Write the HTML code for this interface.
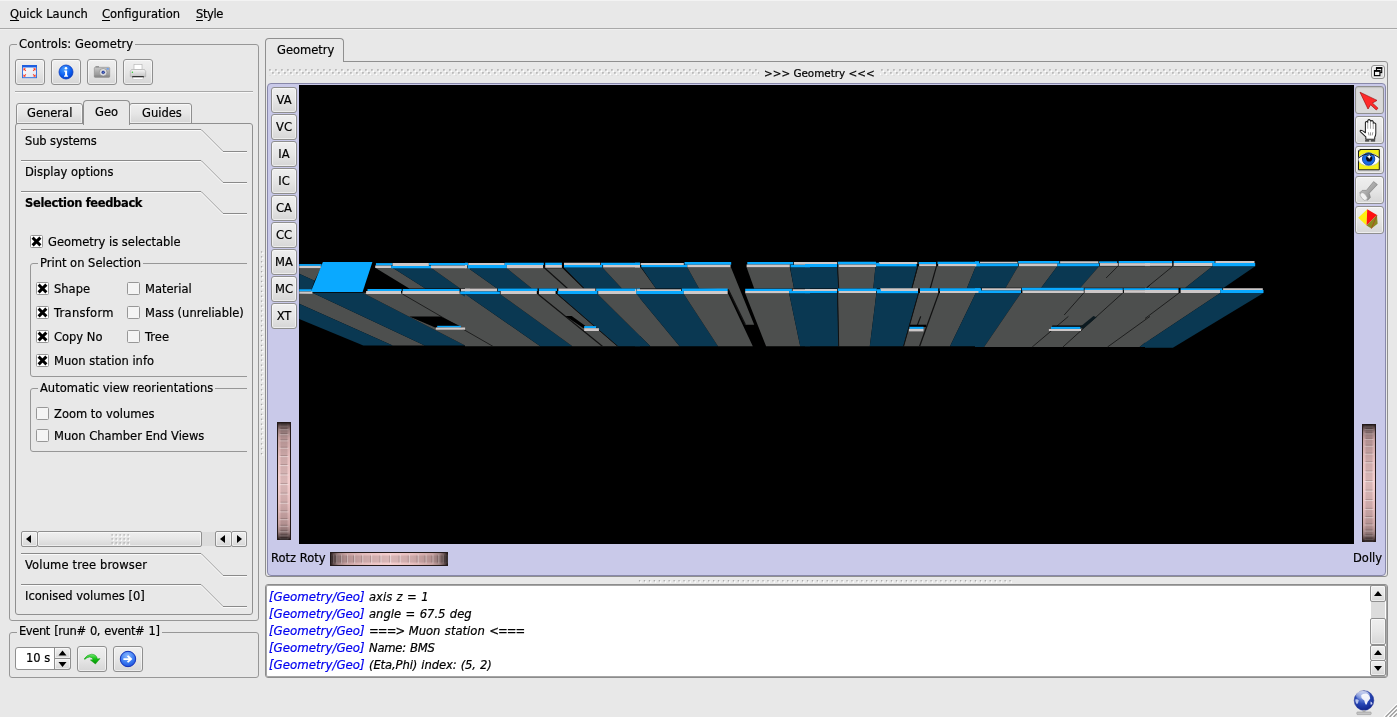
<!DOCTYPE html><html><head><meta charset="utf-8"><title>VP1</title><style>
html,body{margin:0;padding:0}
body{width:1397px;height:717px;overflow:hidden;background:#e8e8e8;position:relative;
 font-family:"DejaVu Sans","Liberation Sans",sans-serif;font-size:11.5px;color:#000;-webkit-text-stroke:0.2px #000}
.a{position:absolute}
.t{position:absolute;white-space:nowrap;line-height:14px;height:14px}
.b{font-weight:bold;letter-spacing:-0.35px}
.btn{position:absolute;box-sizing:border-box;border:1px solid #8f8f8f;border-radius:3px;
 background:linear-gradient(#efefef,#e6e6e6 50%,#d6d6d6);box-shadow:inset 0 0 0 1px rgba(255,255,255,.55)}
.vb{text-align:center;line-height:23px;font-size:11.5px}
.gb{position:absolute;box-sizing:border-box;border:1px solid #979797;border-radius:3px}
.gbt{position:absolute;background:#e8e8e8;padding:0 2px;white-space:nowrap;line-height:14px}
.cb{position:absolute;box-sizing:border-box;width:13px;height:13px;border:1px solid #979797;border-radius:1.5px;background:#f4f4f4}
.cb.on{background:#fff}
.log{font-style:italic;font-size:11.6px;word-spacing:0.7px}
.log i{color:#0000f0;-webkit-text-stroke:0.2px #0000f0;font-style:italic;font-size:11.8px}
.h{margin-left:-1px;letter-spacing:-1.2px}
u{text-decoration:underline;text-decoration-thickness:1.2px;text-underline-offset:1.6px}
svg{position:absolute;overflow:visible}
</style></head><body><div id="root" style="position:absolute;left:0;top:0;width:1397px;height:717px;will-change:transform">
<div class="a" style="left:0;top:0;width:1397px;height:28px;background:#e8e8e8;border-bottom:1px solid #a9a9a9"></div>
<div class="a" style="left:0;top:29px;width:1397px;height:1px;background:#f0f0f0"></div>
<div class="a" style="left:0;top:0;width:1397px;height:1px;background:#f3f3f3"></div>
<div class="t" style="left:10px;top:7px"><u>Q</u>uick Launch</div>
<div class="t" style="left:102px;top:7px"><u>C</u>onfiguration</div>
<div class="t" style="left:196px;top:7px;letter-spacing:-0.4px"><u>S</u>tyle</div>
<div class="gb" style="left:9px;top:44px;width:250px;height:577px"></div>
<div class="gbt" style="left:17px;top:37px;letter-spacing:0.1px">Controls: Geometry</div>
<div class="btn" style="left:15px;top:59px;width:30px;height:26px"></div>
<div class="btn" style="left:51px;top:59px;width:30px;height:26px"></div>
<div class="btn" style="left:87px;top:59px;width:30px;height:26px"></div>
<div class="btn" style="left:123px;top:59px;width:30px;height:26px"></div>
<div class="a" style="left:15px;top:91px;width:238px;height:1px;background:#a8a8a8"></div>
<div class="a" style="left:15px;top:92px;width:238px;height:1px;background:#f8f8f8"></div>
<div class="gb" style="left:15px;top:123px;width:238px;height:492px;border-color:#8f8f8f"></div>
<div class="btn" style="left:16px;top:103px;width:67px;height:21px;border-radius:3px 3px 0 0;border-bottom-color:#8f8f8f"></div>
<div class="btn" style="left:129px;top:103px;width:63px;height:21px;border-radius:3px 3px 0 0"></div>
<div class="a" style="left:83px;top:100px;width:47px;height:25px;box-sizing:border-box;border:1px solid #8f8f8f;border-bottom:none;border-radius:4px 4px 0 0;background:#e8e8e8"></div>
<div class="t" style="left:27px;top:106px">General</div>
<div class="t" style="left:95px;top:105px">Geo</div>
<div class="t" style="left:142px;top:106px">Guides</div>
<svg style="left:0;top:0" width="260" height="717"><path d="M21 129.5H201L223 151.5H247" fill="none" stroke="#8a8a8a" stroke-width="1"/><path d="M21 130.5H201L223 152.5H247" fill="none" stroke="#fafafa" stroke-width="1"/></svg>
<div class="t" style="left:25px;top:134px;letter-spacing:-0.13px">Sub systems</div>
<svg style="left:0;top:0" width="260" height="717"><path d="M21 160.5H201L223 182.5H247" fill="none" stroke="#8a8a8a" stroke-width="1"/><path d="M21 161.5H201L223 183.5H247" fill="none" stroke="#fafafa" stroke-width="1"/></svg>
<div class="t" style="left:25px;top:165px">Display options</div>
<svg style="left:0;top:0" width="260" height="717"><path d="M21 191.5H201L223 213.5H247" fill="none" stroke="#8a8a8a" stroke-width="1"/><path d="M21 192.5H201L223 214.5H247" fill="none" stroke="#fafafa" stroke-width="1"/></svg>
<div class="t b" style="left:25px;top:196px">Selection feedback</div>
<svg style="left:0;top:0" width="260" height="717"><path d="M21 553.5H201L223 575.5H247" fill="none" stroke="#8a8a8a" stroke-width="1"/><path d="M21 554.5H201L223 576.5H247" fill="none" stroke="#fafafa" stroke-width="1"/></svg>
<div class="t" style="left:25px;top:558px;letter-spacing:0.15px">Volume tree browser</div>
<svg style="left:0;top:0" width="260" height="717"><path d="M21 584.5H201L223 606.5H247" fill="none" stroke="#8a8a8a" stroke-width="1"/><path d="M21 585.5H201L223 607.5H247" fill="none" stroke="#fafafa" stroke-width="1"/></svg>
<div class="t" style="left:25px;top:589px">Iconised volumes [0]</div>
<div class="cb on" style="left:30px;top:235px"></div><svg style="left:30px;top:235px" width="13" height="13" viewBox="0 0 13 13"><path d="M3.7 3.7L9.3 9.3M9.3 3.7L3.7 9.3" stroke="#000" stroke-width="3" stroke-linecap="square"/></svg>
<div class="t" style="left:48px;top:235px">Geometry is selectable</div>
<div class="a" style="left:30px;top:255px;width:217px;height:210px;overflow:hidden"><div class="gb" style="left:0;top:8px;width:240px;height:114px"></div><div class="gbt" style="left:8px;top:1px">Print on Selection</div><div class="gb" style="left:0;top:133px;width:240px;height:64px"></div><div class="gbt" style="left:8px;top:126px">Automatic view reorientations</div></div>
<div class="cb on" style="left:36px;top:282px"></div><svg style="left:36px;top:282px" width="13" height="13" viewBox="0 0 13 13"><path d="M3.7 3.7L9.3 9.3M9.3 3.7L3.7 9.3" stroke="#000" stroke-width="3" stroke-linecap="square"/></svg>
<div class="t" style="left:54px;top:282px">Shape</div>
<div class="cb" style="left:127px;top:282px"></div>
<div class="t" style="left:145px;top:282px">Material</div>
<div class="cb on" style="left:36px;top:306px"></div><svg style="left:36px;top:306px" width="13" height="13" viewBox="0 0 13 13"><path d="M3.7 3.7L9.3 9.3M9.3 3.7L3.7 9.3" stroke="#000" stroke-width="3" stroke-linecap="square"/></svg>
<div class="t" style="left:54px;top:306px"><span style="letter-spacing:0.28px">Transform</span></div>
<div class="cb" style="left:127px;top:306px"></div>
<div class="t" style="left:145px;top:306px">Mass (unreliable)</div>
<div class="cb on" style="left:36px;top:330px"></div><svg style="left:36px;top:330px" width="13" height="13" viewBox="0 0 13 13"><path d="M3.7 3.7L9.3 9.3M9.3 3.7L3.7 9.3" stroke="#000" stroke-width="3" stroke-linecap="square"/></svg>
<div class="t" style="left:54px;top:330px">Copy No</div>
<div class="cb" style="left:127px;top:330px"></div>
<div class="t" style="left:145px;top:330px">Tree</div>
<div class="cb on" style="left:36px;top:354px"></div><svg style="left:36px;top:354px" width="13" height="13" viewBox="0 0 13 13"><path d="M3.7 3.7L9.3 9.3M9.3 3.7L3.7 9.3" stroke="#000" stroke-width="3" stroke-linecap="square"/></svg>
<div class="t" style="left:54px;top:354px">Muon station info</div>
<div class="cb" style="left:36px;top:407px"></div>
<div class="t" style="left:54px;top:407px">Zoom to volumes</div>
<div class="cb" style="left:36px;top:429px"></div>
<div class="t" style="left:54px;top:429px">Muon Chamber End Views</div>
<div class="btn" style="left:21px;top:531px;width:17px;height:16px;border-radius:2px"></div>
<div class="btn" style="left:37px;top:531px;width:165px;height:16px;border-radius:2px"></div>
<div class="a" style="left:202px;top:532px;width:13px;height:14px;background:#dcdcdc"></div>
<div class="btn" style="left:215px;top:531px;width:17px;height:16px;border-radius:2px"></div>
<div class="btn" style="left:231px;top:531px;width:16px;height:16px;border-radius:2px"></div>
<svg style="left:0;top:0" width="260" height="717"><path d="M26 539l5-4v8zM220 539l5-4v8zM242 539l-5-4v8z" fill="#000"/><rect x="111.5" y="534.3" width="1.3" height="1.3" fill="#a4a4a4"/><rect x="112.7" y="535.5" width="1.400" height="1.400" fill="#fff"/><rect x="111.5" y="538.3" width="1.3" height="1.3" fill="#a4a4a4"/><rect x="112.7" y="539.5" width="1.400" height="1.400" fill="#fff"/><rect x="111.5" y="542.3" width="1.3" height="1.3" fill="#a4a4a4"/><rect x="112.7" y="543.5" width="1.400" height="1.400" fill="#fff"/><rect x="115.5" y="534.3" width="1.3" height="1.3" fill="#a4a4a4"/><rect x="116.7" y="535.5" width="1.400" height="1.400" fill="#fff"/><rect x="115.5" y="538.3" width="1.3" height="1.3" fill="#a4a4a4"/><rect x="116.7" y="539.5" width="1.400" height="1.400" fill="#fff"/><rect x="115.5" y="542.3" width="1.3" height="1.3" fill="#a4a4a4"/><rect x="116.7" y="543.5" width="1.400" height="1.400" fill="#fff"/><rect x="119.5" y="534.3" width="1.3" height="1.3" fill="#a4a4a4"/><rect x="120.7" y="535.5" width="1.400" height="1.400" fill="#fff"/><rect x="119.5" y="538.3" width="1.3" height="1.3" fill="#a4a4a4"/><rect x="120.7" y="539.5" width="1.400" height="1.400" fill="#fff"/><rect x="119.5" y="542.3" width="1.3" height="1.3" fill="#a4a4a4"/><rect x="120.7" y="543.5" width="1.400" height="1.400" fill="#fff"/><rect x="123.5" y="534.3" width="1.3" height="1.3" fill="#a4a4a4"/><rect x="124.7" y="535.5" width="1.400" height="1.400" fill="#fff"/><rect x="123.5" y="538.3" width="1.3" height="1.3" fill="#a4a4a4"/><rect x="124.7" y="539.5" width="1.400" height="1.400" fill="#fff"/><rect x="123.5" y="542.3" width="1.3" height="1.3" fill="#a4a4a4"/><rect x="124.7" y="543.5" width="1.400" height="1.400" fill="#fff"/><rect x="127.5" y="534.3" width="1.3" height="1.3" fill="#a4a4a4"/><rect x="128.7" y="535.5" width="1.400" height="1.400" fill="#fff"/><rect x="127.5" y="538.3" width="1.3" height="1.3" fill="#a4a4a4"/><rect x="128.7" y="539.5" width="1.400" height="1.400" fill="#fff"/><rect x="127.5" y="542.3" width="1.3" height="1.3" fill="#a4a4a4"/><rect x="128.7" y="543.5" width="1.400" height="1.400" fill="#fff"/></svg>
<div class="gb" style="left:9px;top:632px;width:250px;height:46px"></div>
<div class="gbt" style="left:17px;top:624px;word-spacing:1px;letter-spacing:-0.4px">Event [run# 0, event# 1]</div>
<div class="a" style="left:15px;top:647px;width:56px;height:23px;box-sizing:border-box;border:1px solid #8f8f8f;border-radius:3px;background:#fff"></div>
<div class="t" style="left:26px;top:651px">10 s</div>
<div class="btn" style="left:54px;top:647px;width:17px;height:12px;border-radius:0 3px 0 0"></div>
<div class="btn" style="left:54px;top:658px;width:17px;height:12px;border-radius:0 0 3px 0"></div>
<svg style="left:0;top:0" width="260" height="717"><path d="M62.5 650.5l4 5h-8zM62.5 667l4-5h-8z" fill="#000"/></svg>
<div class="btn" style="left:77px;top:646px;width:30px;height:26px"></div>
<div class="btn" style="left:113px;top:646px;width:30px;height:26px"></div>
<div class="a" style="left:265px;top:61px;width:1123px;height:516px;box-sizing:border-box;border:1px solid #8f8f8f;border-radius:0 3px 3px 3px"></div>
<div class="a" style="left:265px;top:38px;width:79px;height:24px;box-sizing:border-box;border:1px solid #8f8f8f;border-bottom:none;border-radius:4px 4px 0 0;background:#e8e8e8"></div>
<div class="t" style="left:277px;top:43px">Geometry</div>
<svg style="left:269px;top:69px" width="1100" height="6"><defs><pattern id="dots" width="6" height="6" patternUnits="userSpaceOnUse"><rect x="0.2" y="0.2" width="1.5" height="1.5" fill="#a2a2a2"/><rect x="1.5" y="1.5" width="1.6" height="1.6" fill="#fff"/><rect x="3.2" y="3.2" width="1.5" height="1.5" fill="#a2a2a2"/><rect x="4.500" y="4.500" width="1.600" height="1.600" fill="#fff"/></pattern></defs><rect width="1100" height="6.2" fill="url(#dots)"/></svg>
<div class="t" style="left:759px;top:66px;background:#e8e8e8;padding:0 5px;font-size:10.4px">&gt;&gt;&gt; Geometry &lt;&lt;&lt;</div>
<div class="btn" style="left:1371px;top:65px;width:14px;height:14px;border-radius:3px"></div>
<div class="a" style="left:267px;top:83px;width:1119px;height:493px;box-sizing:border-box;border:1px solid #8888aa;border-radius:4px;background:#c9c9e9"></div>
<svg style="left:299px;top:85px" width="1055" height="459" viewBox="299 85 1055 459" shape-rendering="auto">
<rect x="299" y="85" width="1055" height="459" fill="#000"/>
<polygon fill="#4d4f4e" points="299.2,268.2 320.8,268.2 314.5,280.8 299.2,273.8"/>
<polygon fill="#0a3852" points="299.2,273.8 314.5,280.8 311.7,289.2 299.2,289.2"/>
<polygon fill="#4d4f4e" points="299.2,293.8 312.4,292.7 424.7,345.6 392.6,345.6 299.2,303.8"/>
<polygon fill="#0a3852" points="299.2,303.8 392.6,345.6 363.3,345.6 299.2,319.1"/>
<polygon fill="#0a3852" points="312.4,292.7 362.6,292.7 465.1,345.6 424.7,345.6"/>
<polygon fill="#4d4f4e" points="362.6,292.7 470.0,292.7 470.0,345.6 465.1,345.6"/>
<polygon fill="#4d4f4e" points="375.2,267.8 392.6,267.8 425.4,288.5 409.3,288.5"/>
<polygon fill="#0a3852" points="392.6,267.8 431.0,267.8 460.2,288.5 425.4,288.5"/>
<polygon fill="#4d4f4e" points="431.0,267.8 470.0,267.8 470.0,288.5 460.2,288.5"/>
<polygon fill="#0a3852" points="460.2,294.0 470.0,294.0 470.0,299.6"/>
<polygon fill="#4d4f4e" points="465.0,268.2 468.5,268.2 497.1,288.5 465.0,288.5"/>
<polygon fill="#0a3852" points="468.5,268.2 506.8,268.2 531.9,288.5 497.1,288.5"/>
<polygon fill="#4d4f4e" points="506.8,268.2 562.6,268.2 583.5,288.5 531.9,288.5"/>
<polygon fill="#0a3852" points="564.0,267.6 602.4,267.6 621.9,288.5 584.2,288.5"/>
<polygon fill="#4d4f4e" points="602.4,267.6 640.0,267.6 640.0,288.5 621.9,288.5"/>
<polygon fill="#4d4f4e" points="465.0,294.0 465.0,346.3 540.3,346.3"/>
<polygon fill="#0a3852" points="465.0,294.0 499.9,294.0 572.4,346.3 540.3,346.3"/>
<polygon fill="#4d4f4e" points="499.9,294.0 557.0,294.0 617.7,346.3 572.4,346.3"/>
<polygon fill="#0a3852" points="557.7,294.0 597.5,294.0 640.0,335.9 640.0,346.3 617.7,346.3"/>
<polygon fill="#4d4f4e" points="597.5,294.0 640.0,294.0 640.0,335.9"/>
<polygon fill="#4d4f4e" points="635.0,267.3 640.6,267.3 655.9,288.5 635.0,288.5"/>
<polygon fill="#0a3852" points="641.3,267.3 687.3,267.3 699.1,288.5 655.9,288.5"/>
<polygon fill="#4d4f4e" points="687.3,267.3 730.9,267.3 754.2,324.7 745.2,324.7 728.4,289.2 699.1,288.5"/>
<polygon fill="#4d4f4e" points="746.6,267.3 789.8,267.3 794.0,288.5 754.2,288.5"/>
<polygon fill="#0a3852" points="790.1,267.3 810.0,267.3 810.0,288.5 794.0,288.5"/>
<polygon fill="#4d4f4e" points="635.0,294.0 636.4,294.0 679.6,346.3 650.3,346.3 635.0,331.0"/>
<polygon fill="#0a3852" points="635.0,331.0 650.3,346.3 635.0,346.3"/>
<polygon fill="#0a3852" points="636.4,294.0 683.8,294.0 718.0,346.3 679.6,346.3"/>
<polygon fill="#4d4f4e" points="683.8,294.0 728.2,294.0 752.8,346.3 718.0,346.3"/>
<polygon fill="#4d4f4e" points="745.2,293.3 789.1,293.3 800.2,346.3 766.1,346.3"/>
<polygon fill="#0a3852" points="789.1,293.3 810.0,293.3 810.0,346.3 800.2,346.3"/>
<polygon fill="#0a3852" points="805.0,266.9 837.4,266.9 838.5,288.5 805.0,288.5"/>
<polygon fill="#4d4f4e" points="837.8,266.9 875.4,266.9 873.3,288.5 838.5,288.5"/>
<polygon fill="#0a3852" points="875.4,266.9 917.3,266.4 911.7,288.5 873.3,288.5"/>
<polygon fill="#4d4f4e" points="918.2,266.2 975.8,266.2 966.8,288.5 912.1,288.5"/>
<polygon fill="#0a3852" points="975.8,266.2 980.0,266.2 980.0,288.5 966.8,288.5"/>
<polygon fill="#0a3852" points="805.0,292.9 837.4,292.9 838.5,346.3 805.0,346.3"/>
<polygon fill="#4d4f4e" points="837.8,292.9 876.4,292.9 869.8,346.3 838.7,346.3"/>
<polygon fill="#0a3852" points="876.4,293.3 918.2,293.3 903.3,346.3 869.8,346.3"/>
<polygon fill="#4d4f4e" points="918.7,292.9 975.8,292.9 950.0,346.3 903.7,346.3"/>
<polygon fill="#0a3852" points="975.8,292.9 980.0,292.9 980.0,346.3 950.0,346.3"/>
<polygon fill="#0a3852" points="975.0,266.2 1018.2,266.2 1005.7,287.8 975.0,287.8"/>
<polygon fill="#4d4f4e" points="1018.2,266.2 1057.3,266.2 1041.2,287.8 1005.7,287.8"/>
<polygon fill="#0a3852" points="1057.3,266.2 1099.1,266.2 1080.3,287.8 1041.2,287.8"/>
<polygon fill="#4d4f4e" points="1099.1,266.2 1150.0,266.2 1150.0,287.8 1080.3,287.8"/>
<polygon fill="#0a3852" points="975.0,292.9 1021.0,292.9 984.1,347.0 975.0,347.0"/>
<polygon fill="#4d4f4e" points="1021.0,292.9 1150.0,292.9 1150.0,338.7 1139.6,347.0 984.1,347.0"/>
<polygon fill="#0a3852" points="1150.0,338.7 1150.0,347.0 1139.6,347.0"/>
<polygon fill="#4d4f4e" points="1145.0,266.2 1212.6,266.2 1185.4,287.8 1145.0,287.8"/>
<polygon fill="#0a3852" points="1212.6,266.2 1255.2,266.2 1223.8,287.8 1185.4,287.8"/>
<polygon fill="#4d4f4e" points="1145.0,292.9 1220.3,292.9 1145.0,342.9"/>
<polygon fill="#0a3852" points="1220.3,292.9 1263.5,292.9 1172.9,347.7 1145.0,347.7 1145.0,342.9"/>
<line x1="402.4" y1="294.0" x2="465.0" y2="330.3" stroke="#111" stroke-width="0.8"/>
<line x1="543.8" y1="267.3" x2="567.5" y2="288.5" stroke="#111" stroke-width="1.2"/>
<line x1="563.3" y1="267.6" x2="584.2" y2="288.5" stroke="#111" stroke-width="1.0"/>
<line x1="465.0" y1="330.3" x2="492.9" y2="346.3" stroke="#111" stroke-width="0.8"/>
<line x1="537.8" y1="294.0" x2="602.4" y2="346.3" stroke="#111" stroke-width="1.2"/>
<line x1="557.0" y1="294.0" x2="617.7" y2="346.3" stroke="#111" stroke-width="1.0"/>
<line x1="728.2" y1="289.6" x2="745.4" y2="324.7" stroke="#111" stroke-width="1.4"/>
<line x1="936.5" y1="266.2" x2="930.2" y2="288.5" stroke="#111" stroke-width="1.2"/>
<line x1="917.7" y1="266.4" x2="911.8" y2="288.5" stroke="#111" stroke-width="1.0"/>
<line x1="837.6" y1="266.9" x2="838.7" y2="288.5" stroke="#111" stroke-width="1.0"/>
<line x1="938.9" y1="292.9" x2="919.6" y2="346.3" stroke="#111" stroke-width="1.3"/>
<line x1="918.5" y1="293.3" x2="903.6" y2="346.3" stroke="#111" stroke-width="1.0"/>
<line x1="837.6" y1="292.9" x2="838.7" y2="346.3" stroke="#111" stroke-width="1.0"/>
<line x1="920.7" y1="316.4" x2="917.3" y2="325.4" stroke="#111" stroke-width="1.2"/>
<line x1="1117.9" y1="266.2" x2="1106.1" y2="278.0" stroke="#111" stroke-width="0.8"/>
<line x1="1150.0" y1="285.0" x2="1147.2" y2="287.8" stroke="#111" stroke-width="0.8"/>
<line x1="1083.8" y1="292.9" x2="1064.2" y2="315.0" stroke="#111" stroke-width="0.8"/>
<line x1="1068.4" y1="316.4" x2="1032.2" y2="347.0" stroke="#111" stroke-width="0.8"/>
<line x1="1122.8" y1="292.9" x2="1062.9" y2="347.0" stroke="#111" stroke-width="0.8"/>
<line x1="1150.0" y1="316.4" x2="1107.5" y2="347.0" stroke="#111" stroke-width="0.8"/>
<line x1="1172.9" y1="266.2" x2="1146.4" y2="287.8" stroke="#111" stroke-width="0.8"/>
<line x1="1179.2" y1="292.9" x2="1145.0" y2="318.5" stroke="#111" stroke-width="0.8"/>
<polygon fill="#0aa9ff" points="322.9,262.0 372.4,262.0 362.6,292.0 310.8,292.0"/>
<polygon fill="#0aa9ff" points="299.2,264.1 321.5,264.1 321.5,265.9 299.2,265.9"/>
<polygon fill="#cdc8c8" points="299.2,265.9 320.8,265.9 320.8,268.2 299.2,268.2"/>
<polygon fill="#0aa9ff" points="299.2,289.2 311.7,289.2 311.7,291.5 299.2,291.5"/>
<polygon fill="#cdc8c8" points="299.2,291.5 312.4,291.5 312.4,293.8 299.2,293.8"/>
<polygon fill="#0aa9ff" points="375.9,263.1 392.6,263.1 392.6,265.5 375.9,265.5"/>
<polygon fill="#cdc8c8" points="392.6,263.1 428.9,263.1 428.9,265.9 392.6,265.9"/>
<polygon fill="#0aa9ff" points="428.9,263.1 467.9,263.1 467.9,265.5 428.9,265.5"/>
<polygon fill="#cdc8c8" points="468.6,263.1 470.0,263.1 470.0,265.5 468.6,265.5"/>
<polygon fill="#cdc8c8" points="375.2,265.5 391.2,265.5 391.2,268.0 375.2,268.0"/>
<polygon fill="#0aa9ff" points="391.2,265.9 431.0,265.9 431.0,268.2 391.2,268.2"/>
<polygon fill="#cdc8c8" points="431.0,265.5 466.5,265.5 466.5,268.2 431.0,268.2"/>
<polygon fill="#0aa9ff" points="467.9,265.5 470.0,265.5 470.0,268.2 467.9,268.2"/>
<polygon fill="#0aa9ff" points="367.5,288.9 401.7,288.9 401.7,291.0 367.5,291.0"/>
<polygon fill="#0aa9ff" points="402.7,288.9 459.6,288.9 459.6,291.0 402.7,291.0"/>
<polygon fill="#cdc8c8" points="460.9,288.9 470.0,288.9 470.0,291.5 460.9,291.5"/>
<polygon fill="#cdc8c8" points="366.1,291.0 401.0,291.0 401.0,294.0 366.1,294.0"/>
<polygon fill="#cdc8c8" points="402.4,291.0 459.6,291.0 459.6,294.0 402.4,294.0"/>
<polygon fill="#0aa9ff" points="460.2,291.5 470.0,291.5 470.0,294.0 460.2,294.0"/>
<polygon fill="#000" points="409.3,316.4 440.7,316.4 460.9,326.4 435.8,327.8"/>
<polygon fill="#0aa9ff" points="437.2,325.8 460.9,325.8 460.9,327.5 437.2,327.5"/>
<polygon fill="#cdc8c8" points="435.8,327.5 465.1,327.5 465.1,329.7 435.8,329.7"/>
<polygon fill="#000" points="565.4,315.9 571.7,315.9 585.2,325.8 583.5,328.2"/>
<polygon fill="#0aa9ff" points="584.2,326.1 596.1,326.1 596.1,328.2 584.2,328.2"/>
<polygon fill="#cdc8c8" points="584.2,328.2 598.9,328.2 598.9,331.0 584.2,331.0"/>
<polygon fill="#0aa9ff" points="465.0,262.7 467.8,262.7 467.8,265.0 465.0,265.0"/>
<polygon fill="#cdc8c8" points="465.0,265.0 467.1,265.0 467.1,268.2 465.0,268.2"/>
<polygon fill="#cdc8c8" points="468.5,263.1 504.7,263.1 504.7,265.0 468.5,265.0"/>
<polygon fill="#0aa9ff" points="467.8,265.0 506.8,265.0 506.8,268.2 467.8,268.2"/>
<polygon fill="#0aa9ff" points="504.7,262.7 543.8,262.7 543.8,265.0 504.7,265.0"/>
<polygon fill="#cdc8c8" points="506.8,265.0 543.1,265.0 543.1,268.2 506.8,268.2"/>
<polygon fill="#0aa9ff" points="545.2,262.7 561.9,262.7 561.9,265.0 545.2,265.0"/>
<polygon fill="#cdc8c8" points="545.2,265.0 561.9,265.0 561.9,267.8 545.2,267.8"/>
<polygon fill="#cdc8c8" points="564.0,262.7 600.3,262.7 600.3,265.0 564.0,265.0"/>
<polygon fill="#0aa9ff" points="564.0,265.0 602.4,265.0 602.4,267.6 564.0,267.6"/>
<polygon fill="#0aa9ff" points="601.0,262.7 640.0,262.7 640.0,265.0 601.0,265.0"/>
<polygon fill="#cdc8c8" points="603.1,265.0 640.0,265.0 640.0,267.6 603.1,267.6"/>
<polygon fill="#cdc8c8" points="465.0,288.5 497.1,288.5 497.1,291.5 465.0,291.5"/>
<polygon fill="#0aa9ff" points="465.0,291.5 499.9,291.5 499.9,294.0 465.0,294.0"/>
<polygon fill="#0aa9ff" points="497.8,288.5 537.5,288.5 537.5,291.0 497.8,291.0"/>
<polygon fill="#cdc8c8" points="500.6,291.0 536.8,291.0 536.8,294.0 500.6,294.0"/>
<polygon fill="#0aa9ff" points="538.9,288.5 557.0,288.5 557.0,291.0 538.9,291.0"/>
<polygon fill="#cdc8c8" points="538.9,291.0 555.6,291.0 555.6,294.0 538.9,294.0"/>
<polygon fill="#cdc8c8" points="558.4,288.5 595.4,288.5 595.4,291.0 558.4,291.0"/>
<polygon fill="#0aa9ff" points="557.7,291.0 597.5,291.0 597.5,294.0 557.7,294.0"/>
<polygon fill="#0aa9ff" points="596.1,288.5 635.8,288.5 635.8,291.0 596.1,291.0"/>
<polygon fill="#cdc8c8" points="598.2,291.0 635.1,291.0 635.1,294.0 598.2,294.0"/>
<polygon fill="#0aa9ff" points="636.5,288.5 640.0,288.5 640.0,294.0 636.5,294.0"/>
<polygon fill="#0aa9ff" points="635.0,262.7 639.9,262.7 639.9,265.0 635.0,265.0"/>
<polygon fill="#cdc8c8" points="635.0,265.0 639.9,265.0 639.9,267.3 635.0,267.3"/>
<polygon fill="#cdc8c8" points="640.6,263.1 683.8,263.1 683.8,265.0 640.6,265.0"/>
<polygon fill="#0aa9ff" points="641.3,265.0 687.3,265.0 687.3,267.3 641.3,267.3"/>
<polygon fill="#0aa9ff" points="684.5,262.0 731.2,262.0 731.2,264.8 684.5,264.8"/>
<polygon fill="#cdc8c8" points="687.3,264.8 730.5,264.8 730.5,267.3 687.3,267.3"/>
<polygon fill="#0aa9ff" points="747.3,262.0 793.3,262.0 793.3,264.5 747.3,264.5"/>
<polygon fill="#cdc8c8" points="746.6,264.5 789.8,264.5 789.8,267.3 746.6,267.3"/>
<polygon fill="#cdc8c8" points="794.0,262.0 810.0,262.0 810.0,264.8 794.0,264.8"/>
<polygon fill="#0aa9ff" points="790.5,264.8 810.0,264.8 810.0,267.3 790.5,267.3"/>
<polygon fill="#cdc8c8" points="635.0,289.2 636.4,289.2 636.4,294.0 635.0,294.0"/>
<polygon fill="#cdc8c8" points="637.1,289.2 681.0,289.2 681.0,291.0 637.1,291.0"/>
<polygon fill="#0aa9ff" points="636.4,291.0 683.8,291.0 683.8,294.0 636.4,294.0"/>
<polygon fill="#0aa9ff" points="681.7,288.5 727.7,288.5 727.7,291.0 681.7,291.0"/>
<polygon fill="#cdc8c8" points="683.8,291.0 727.7,291.0 727.7,294.0 683.8,294.0"/>
<polygon fill="#0aa9ff" points="745.2,288.7 791.9,288.7 791.9,291.0 745.2,291.0"/>
<polygon fill="#cdc8c8" points="745.2,291.0 789.1,291.0 789.1,293.3 745.2,293.3"/>
<polygon fill="#cdc8c8" points="792.6,289.2 810.0,289.2 810.0,291.0 792.6,291.0"/>
<polygon fill="#0aa9ff" points="789.1,291.0 810.0,291.0 810.0,293.3 789.1,293.3"/>
<polygon fill="#000" points="909.6,324.7 926.3,324.7 926.3,327.0 909.6,327.0"/>
<polygon fill="#0aa9ff" points="909.6,326.8 923.5,326.8 923.5,328.9 909.6,328.9"/>
<polygon fill="#cdc8c8" points="908.9,328.9 923.5,328.9 923.5,331.4 908.9,331.4"/>
<polygon fill="#cdc8c8" points="805.0,262.0 837.1,262.0 837.1,264.1 805.0,264.1"/>
<polygon fill="#0aa9ff" points="805.0,264.1 837.1,264.1 837.1,266.9 805.0,266.9"/>
<polygon fill="#0aa9ff" points="837.8,261.7 876.1,261.7 876.1,264.5 837.8,264.5"/>
<polygon fill="#cdc8c8" points="838.5,264.5 876.1,264.5 876.1,266.9 838.5,266.9"/>
<polygon fill="#cdc8c8" points="878.9,262.0 917.3,262.0 917.3,264.1 878.9,264.1"/>
<polygon fill="#0aa9ff" points="876.1,264.1 916.6,264.1 916.6,266.4 876.1,266.4"/>
<polygon fill="#0aa9ff" points="876.1,262.7 879.6,262.7 879.6,264.8 876.1,264.8"/>
<polygon fill="#0aa9ff" points="918.7,262.0 936.1,262.0 936.1,264.1 918.7,264.1"/>
<polygon fill="#cdc8c8" points="919.1,264.1 936.1,264.1 936.1,266.2 919.1,266.2"/>
<polygon fill="#0aa9ff" points="937.5,261.7 978.6,261.7 978.6,264.1 937.5,264.1"/>
<polygon fill="#cdc8c8" points="938.2,264.1 975.8,264.1 975.8,266.2 938.2,266.2"/>
<polygon fill="#0aa9ff" points="976.2,263.4 980.0,263.4 980.0,266.2 976.2,266.2"/>
<polygon fill="#cdc8c8" points="805.0,288.9 837.1,288.9 837.1,291.0 805.0,291.0"/>
<polygon fill="#0aa9ff" points="805.0,291.0 837.1,291.0 837.1,292.9 805.0,292.9"/>
<polygon fill="#0aa9ff" points="837.8,288.5 876.8,288.5 876.8,291.0 837.8,291.0"/>
<polygon fill="#cdc8c8" points="838.5,291.0 876.1,291.0 876.1,292.9 838.5,292.9"/>
<polygon fill="#cdc8c8" points="880.3,288.2 918.0,288.2 918.0,291.0 880.3,291.0"/>
<polygon fill="#0aa9ff" points="876.8,291.0 918.0,291.0 918.0,293.3 876.8,293.3"/>
<polygon fill="#0aa9ff" points="876.8,289.2 881.0,289.2 881.0,291.5 876.8,291.5"/>
<polygon fill="#0aa9ff" points="920.0,288.2 938.2,288.2 938.2,291.0 920.0,291.0"/>
<polygon fill="#cdc8c8" points="920.0,291.0 938.2,291.0 938.2,292.9 920.0,292.9"/>
<polygon fill="#0aa9ff" points="939.6,288.2 980.0,288.2 980.0,291.0 939.6,291.0"/>
<polygon fill="#cdc8c8" points="940.0,291.0 975.8,291.0 975.8,292.9 940.0,292.9"/>
<polygon fill="#0aa9ff" points="976.2,290.6 980.0,290.6 980.0,292.9 976.2,292.9"/>
<polygon fill="#000" points="1052.4,325.4 1085.2,325.4 1081.0,327.5 1051.0,327.5"/>
<polygon fill="#0c1a20" points="1093.5,315.9 1096.6,317.3 1082.7,328.9 1080.3,326.8"/>
<polygon fill="#0aa9ff" points="1051.0,326.8 1080.3,326.8 1080.3,328.9 1051.0,328.9"/>
<polygon fill="#cdc8c8" points="1048.9,328.9 1081.0,328.9 1081.0,331.0 1048.9,331.0"/>
<polygon fill="#0aa9ff" points="975.0,261.3 979.2,261.3 979.2,266.2 975.0,266.2"/>
<polygon fill="#cdc8c8" points="975.0,264.1 976.4,264.1 976.4,266.2 975.0,266.2"/>
<polygon fill="#cdc8c8" points="979.9,261.7 1017.5,261.7 1017.5,263.6 979.9,263.6"/>
<polygon fill="#0aa9ff" points="979.2,263.6 1018.2,263.6 1018.2,266.2 979.2,266.2"/>
<polygon fill="#0aa9ff" points="1018.2,261.0 1059.4,261.0 1059.4,263.6 1018.2,263.6"/>
<polygon fill="#cdc8c8" points="1018.9,263.6 1057.3,263.6 1057.3,266.2 1018.9,266.2"/>
<polygon fill="#cdc8c8" points="1060.1,261.3 1098.4,261.3 1098.4,263.6 1060.1,263.6"/>
<polygon fill="#0aa9ff" points="1057.3,263.6 1099.1,263.6 1099.1,266.2 1057.3,266.2"/>
<polygon fill="#0aa9ff" points="1099.1,261.3 1117.2,261.3 1117.2,263.1 1099.1,263.1"/>
<polygon fill="#cdc8c8" points="1099.8,263.1 1117.9,263.1 1117.9,265.9 1099.8,265.9"/>
<polygon fill="#0aa9ff" points="1118.6,261.0 1150.0,261.0 1150.0,263.1 1118.6,263.1"/>
<polygon fill="#cdc8c8" points="1118.6,263.1 1150.0,263.1 1150.0,265.9 1118.6,265.9"/>
<polygon fill="#0aa9ff" points="975.0,288.2 981.3,288.2 981.3,291.0 975.0,291.0"/>
<polygon fill="#cdc8c8" points="975.0,291.0 978.5,291.0 978.5,292.9 975.0,292.9"/>
<polygon fill="#cdc8c8" points="982.0,288.2 1021.0,288.2 1021.0,290.6 982.0,290.6"/>
<polygon fill="#0aa9ff" points="979.2,290.6 1021.0,290.6 1021.0,292.9 979.2,292.9"/>
<polygon fill="#0aa9ff" points="1021.7,287.8 1083.8,287.8 1083.8,290.6 1021.7,290.6"/>
<polygon fill="#cdc8c8" points="1022.4,290.6 1083.8,290.6 1083.8,292.9 1022.4,292.9"/>
<polygon fill="#0aa9ff" points="1084.5,288.2 1122.8,288.2 1122.8,289.9 1084.5,289.9"/>
<polygon fill="#cdc8c8" points="1084.5,289.9 1122.8,289.9 1122.8,292.9 1084.5,292.9"/>
<polygon fill="#0aa9ff" points="1123.5,288.2 1150.0,288.2 1150.0,290.1 1123.5,290.1"/>
<polygon fill="#cdc8c8" points="1123.9,290.1 1150.0,290.1 1150.0,292.9 1123.9,292.9"/>
<polygon fill="#0aa9ff" points="1145.0,261.0 1172.2,261.0 1172.2,263.1 1145.0,263.1"/>
<polygon fill="#cdc8c8" points="1145.0,263.1 1172.2,263.1 1172.2,265.9 1145.0,265.9"/>
<polygon fill="#0aa9ff" points="1173.6,261.0 1214.7,261.0 1214.7,263.1 1173.6,263.1"/>
<polygon fill="#cdc8c8" points="1173.6,263.1 1212.6,263.1 1212.6,265.9 1173.6,265.9"/>
<polygon fill="#cdc8c8" points="1215.4,261.0 1254.5,261.0 1254.5,263.1 1215.4,263.1"/>
<polygon fill="#0aa9ff" points="1212.6,263.1 1255.2,263.1 1255.2,266.2 1212.6,266.2"/>
<polygon fill="#0aa9ff" points="1145.0,288.2 1178.5,288.2 1178.5,290.1 1145.0,290.1"/>
<polygon fill="#cdc8c8" points="1145.0,290.1 1178.5,290.1 1178.5,292.9 1145.0,292.9"/>
<polygon fill="#0aa9ff" points="1180.6,288.2 1222.4,288.2 1222.4,290.1 1180.6,290.1"/>
<polygon fill="#cdc8c8" points="1180.6,290.1 1220.3,290.1 1220.3,292.9 1180.6,292.9"/>
<polygon fill="#cdc8c8" points="1223.1,288.2 1262.8,288.2 1262.8,290.1 1223.1,290.1"/>
<polygon fill="#0aa9ff" points="1220.3,290.1 1263.5,290.1 1263.5,292.9 1220.3,292.9"/>
</svg>
<div class="btn vb" style="left:271px;top:87.3px;width:26px;height:25.6px;line-height:24px">VA</div>
<div class="btn vb" style="left:271px;top:114.3px;width:26px;height:25.6px;line-height:24px">VC</div>
<div class="btn vb" style="left:271px;top:141.3px;width:26px;height:25.6px;line-height:24px">IA</div>
<div class="btn vb" style="left:271px;top:168.3px;width:26px;height:25.6px;line-height:24px">IC</div>
<div class="btn vb" style="left:271px;top:195.3px;width:26px;height:25.6px;line-height:24px">CA</div>
<div class="btn vb" style="left:271px;top:222.3px;width:26px;height:25.6px;line-height:24px">CC</div>
<div class="btn vb" style="left:271px;top:249.3px;width:26px;height:25.6px;line-height:24px">MA</div>
<div class="btn vb" style="left:271px;top:276.3px;width:26px;height:25.6px;line-height:24px">MC</div>
<div class="btn vb" style="left:271px;top:303.3px;width:26px;height:25.6px;line-height:24px">XT</div>
<div class="btn" style="left:1354.5px;top:85.6px;width:29px;height:28.6px;background:#d9d9d9;box-shadow:inset 0 1px 1px rgba(0,0,0,.12)"></div>
<div class="btn" style="left:1354.5px;top:115.6px;width:29px;height:28.6px"></div>
<div class="btn" style="left:1354.5px;top:145.6px;width:29px;height:28.6px"></div>
<div class="btn" style="left:1354.5px;top:175.6px;width:29px;height:28.6px"></div>
<div class="btn" style="left:1354.5px;top:205.6px;width:29px;height:28.6px"></div>
<svg style="left:277px;top:422px" width="14" height="118" viewBox="0 0 14 118"><defs><linearGradient id="wg1" x1="0" y1="0" x2="0" y2="1"><stop offset="0.00" stop-color="#2a1e1e"/><stop offset="0.02" stop-color="#5a4646"/><stop offset="0.06" stop-color="#9a7e7e"/><stop offset="0.13" stop-color="#c8a2a2"/><stop offset="0.30" stop-color="#e6bebe"/><stop offset="0.50" stop-color="#f4cece"/><stop offset="0.70" stop-color="#e6bebe"/><stop offset="0.87" stop-color="#c8a2a2"/><stop offset="0.94" stop-color="#9a7e7e"/><stop offset="0.98" stop-color="#5a4646"/><stop offset="1.00" stop-color="#2a1e1e"/></linearGradient></defs><rect x="0" y="0" width="14" height="118" fill="#241a1a"/><rect x="1" y="1" width="12" height="116" fill="url(#wg1)"/><rect x="3.500" y="1" width="7.0" height="116" fill="#000" opacity="0.11"/><rect x="2.500" y="1.5" width="9.0" height="1.100" fill="#fff" opacity="0.12"/><rect x="3.500" y="0.5" width="7.0" height="0.900" fill="#000" opacity="0.16"/><rect x="2.500" y="3.5" width="9.0" height="1.100" fill="#fff" opacity="0.17"/><rect x="3.500" y="2.5" width="7.0" height="0.900" fill="#000" opacity="0.16"/><rect x="2.500" y="7.1" width="9.0" height="1.100" fill="#fff" opacity="0.22"/><rect x="3.500" y="6.1" width="7.0" height="0.900" fill="#000" opacity="0.16"/><rect x="2.500" y="12.1" width="9.0" height="1.100" fill="#fff" opacity="0.27"/><rect x="3.500" y="11.1" width="7.0" height="0.900" fill="#000" opacity="0.16"/><rect x="2.500" y="18.3" width="9.0" height="1.100" fill="#fff" opacity="0.31"/><rect x="3.500" y="17.3" width="7.0" height="0.900" fill="#000" opacity="0.16"/><rect x="2.500" y="25.7" width="9.0" height="1.100" fill="#fff" opacity="0.34"/><rect x="3.500" y="24.7" width="7.0" height="0.900" fill="#000" opacity="0.16"/><rect x="2.500" y="34.0" width="9.0" height="1.100" fill="#fff" opacity="0.37"/><rect x="3.500" y="33.0" width="7.0" height="0.900" fill="#000" opacity="0.16"/><rect x="2.500" y="43.0" width="9.0" height="1.100" fill="#fff" opacity="0.39"/><rect x="3.500" y="42.0" width="7.0" height="0.900" fill="#000" opacity="0.16"/><rect x="2.500" y="52.4" width="9.0" height="1.100" fill="#fff" opacity="0.40"/><rect x="3.500" y="51.4" width="7.0" height="0.900" fill="#000" opacity="0.16"/><rect x="2.500" y="62.0" width="9.0" height="1.100" fill="#fff" opacity="0.40"/><rect x="3.500" y="61.0" width="7.0" height="0.900" fill="#000" opacity="0.16"/><rect x="2.500" y="71.6" width="9.0" height="1.100" fill="#fff" opacity="0.39"/><rect x="3.500" y="70.6" width="7.0" height="0.900" fill="#000" opacity="0.16"/><rect x="2.500" y="80.7" width="9.0" height="1.100" fill="#fff" opacity="0.38"/><rect x="3.500" y="79.7" width="7.0" height="0.900" fill="#000" opacity="0.16"/><rect x="2.500" y="89.3" width="9.0" height="1.100" fill="#fff" opacity="0.35"/><rect x="3.500" y="88.3" width="7.0" height="0.900" fill="#000" opacity="0.16"/><rect x="2.500" y="97.1" width="9.0" height="1.100" fill="#fff" opacity="0.32"/><rect x="3.500" y="96.1" width="7.0" height="0.900" fill="#000" opacity="0.16"/><rect x="2.500" y="103.8" width="9.0" height="1.100" fill="#fff" opacity="0.28"/><rect x="3.500" y="102.8" width="7.0" height="0.900" fill="#000" opacity="0.16"/><rect x="2.500" y="109.2" width="9.0" height="1.100" fill="#fff" opacity="0.24"/><rect x="3.500" y="108.2" width="7.0" height="0.900" fill="#000" opacity="0.16"/><rect x="2.500" y="113.3" width="9.0" height="1.100" fill="#fff" opacity="0.19"/><rect x="3.500" y="112.3" width="7.0" height="0.900" fill="#000" opacity="0.16"/><rect x="2.500" y="115.9" width="9.0" height="1.100" fill="#fff" opacity="0.14"/><rect x="3.500" y="114.9" width="7.0" height="0.900" fill="#000" opacity="0.16"/><rect x="2.500" y="117.0" width="9.0" height="1.100" fill="#fff" opacity="0.09"/><rect x="3.500" y="116.0" width="7.0" height="0.900" fill="#000" opacity="0.16"/></svg>
<svg style="left:1362px;top:424px" width="14" height="118" viewBox="0 0 14 118"><defs><linearGradient id="wg2" x1="0" y1="0" x2="0" y2="1"><stop offset="0.00" stop-color="#2a1e1e"/><stop offset="0.02" stop-color="#5a4646"/><stop offset="0.06" stop-color="#9a7e7e"/><stop offset="0.13" stop-color="#c8a2a2"/><stop offset="0.30" stop-color="#e6bebe"/><stop offset="0.50" stop-color="#f4cece"/><stop offset="0.70" stop-color="#e6bebe"/><stop offset="0.87" stop-color="#c8a2a2"/><stop offset="0.94" stop-color="#9a7e7e"/><stop offset="0.98" stop-color="#5a4646"/><stop offset="1.00" stop-color="#2a1e1e"/></linearGradient></defs><rect x="0" y="0" width="14" height="118" fill="#241a1a"/><rect x="1" y="1" width="12" height="116" fill="url(#wg2)"/><rect x="3.500" y="1" width="7.0" height="116" fill="#000" opacity="0.11"/><rect x="2.500" y="1.1" width="9.0" height="1.100" fill="#fff" opacity="0.09"/><rect x="3.500" y="0.1" width="7.0" height="0.900" fill="#000" opacity="0.16"/><rect x="2.500" y="2.3" width="9.0" height="1.100" fill="#fff" opacity="0.15"/><rect x="3.500" y="1.3" width="7.0" height="0.900" fill="#000" opacity="0.16"/><rect x="2.500" y="5.0" width="9.0" height="1.100" fill="#fff" opacity="0.20"/><rect x="3.500" y="4.0" width="7.0" height="0.900" fill="#000" opacity="0.16"/><rect x="2.500" y="9.3" width="9.0" height="1.100" fill="#fff" opacity="0.24"/><rect x="3.500" y="8.3" width="7.0" height="0.900" fill="#000" opacity="0.16"/><rect x="2.500" y="14.9" width="9.0" height="1.100" fill="#fff" opacity="0.29"/><rect x="3.500" y="13.9" width="7.0" height="0.900" fill="#000" opacity="0.16"/><rect x="2.500" y="21.7" width="9.0" height="1.100" fill="#fff" opacity="0.33"/><rect x="3.500" y="20.7" width="7.0" height="0.900" fill="#000" opacity="0.16"/><rect x="2.500" y="29.6" width="9.0" height="1.100" fill="#fff" opacity="0.36"/><rect x="3.500" y="28.6" width="7.0" height="0.900" fill="#000" opacity="0.16"/><rect x="2.500" y="38.2" width="9.0" height="1.100" fill="#fff" opacity="0.38"/><rect x="3.500" y="37.2" width="7.0" height="0.900" fill="#000" opacity="0.16"/><rect x="2.500" y="47.4" width="9.0" height="1.100" fill="#fff" opacity="0.39"/><rect x="3.500" y="46.4" width="7.0" height="0.900" fill="#000" opacity="0.16"/><rect x="2.500" y="57.0" width="9.0" height="1.100" fill="#fff" opacity="0.40"/><rect x="3.500" y="56.0" width="7.0" height="0.900" fill="#000" opacity="0.16"/><rect x="2.500" y="66.6" width="9.0" height="1.100" fill="#fff" opacity="0.40"/><rect x="3.500" y="65.6" width="7.0" height="0.900" fill="#000" opacity="0.16"/><rect x="2.500" y="76.0" width="9.0" height="1.100" fill="#fff" opacity="0.39"/><rect x="3.500" y="75.0" width="7.0" height="0.900" fill="#000" opacity="0.16"/><rect x="2.500" y="84.9" width="9.0" height="1.100" fill="#fff" opacity="0.37"/><rect x="3.500" y="83.9" width="7.0" height="0.900" fill="#000" opacity="0.16"/><rect x="2.500" y="93.1" width="9.0" height="1.100" fill="#fff" opacity="0.34"/><rect x="3.500" y="92.1" width="7.0" height="0.900" fill="#000" opacity="0.16"/><rect x="2.500" y="100.4" width="9.0" height="1.100" fill="#fff" opacity="0.30"/><rect x="3.500" y="99.4" width="7.0" height="0.900" fill="#000" opacity="0.16"/><rect x="2.500" y="106.5" width="9.0" height="1.100" fill="#fff" opacity="0.26"/><rect x="3.500" y="105.5" width="7.0" height="0.900" fill="#000" opacity="0.16"/><rect x="2.500" y="111.3" width="9.0" height="1.100" fill="#fff" opacity="0.22"/><rect x="3.500" y="110.3" width="7.0" height="0.900" fill="#000" opacity="0.16"/><rect x="2.500" y="114.8" width="9.0" height="1.100" fill="#fff" opacity="0.17"/><rect x="3.500" y="113.8" width="7.0" height="0.900" fill="#000" opacity="0.16"/><rect x="2.500" y="116.6" width="9.0" height="1.100" fill="#fff" opacity="0.12"/><rect x="3.500" y="115.6" width="7.0" height="0.900" fill="#000" opacity="0.16"/></svg>
<svg style="left:330px;top:552px" width="118" height="14" viewBox="0 0 118 14"><defs><linearGradient id="wg3" x1="0" y1="0" x2="1" y2="0"><stop offset="0.00" stop-color="#2a1e1e"/><stop offset="0.02" stop-color="#5a4646"/><stop offset="0.06" stop-color="#9a7e7e"/><stop offset="0.13" stop-color="#c8a2a2"/><stop offset="0.30" stop-color="#e6bebe"/><stop offset="0.50" stop-color="#f4cece"/><stop offset="0.70" stop-color="#e6bebe"/><stop offset="0.87" stop-color="#c8a2a2"/><stop offset="0.94" stop-color="#9a7e7e"/><stop offset="0.98" stop-color="#5a4646"/><stop offset="1.00" stop-color="#2a1e1e"/></linearGradient></defs><rect x="0" y="0" width="118" height="14" fill="#241a1a"/><rect x="1" y="1" width="116" height="12" fill="url(#wg3)"/><rect x="1" y="3.500" width="116" height="7.0" fill="#000" opacity="0.11"/><rect x="1.3" y="2.500" width="1.100" height="9.0" fill="#fff" opacity="0.11"/><rect x="0.3" y="3.500" width="0.900" height="7.0" fill="#000" opacity="0.16"/><rect x="3.0" y="2.500" width="1.100" height="9.0" fill="#fff" opacity="0.16"/><rect x="2.0" y="3.500" width="0.900" height="7.0" fill="#000" opacity="0.16"/><rect x="6.2" y="2.500" width="1.100" height="9.0" fill="#fff" opacity="0.21"/><rect x="5.2" y="3.500" width="0.900" height="7.0" fill="#000" opacity="0.16"/><rect x="10.9" y="2.500" width="1.100" height="9.0" fill="#fff" opacity="0.26"/><rect x="9.9" y="3.500" width="0.900" height="7.0" fill="#000" opacity="0.16"/><rect x="16.9" y="2.500" width="1.100" height="9.0" fill="#fff" opacity="0.30"/><rect x="15.9" y="3.500" width="0.900" height="7.0" fill="#000" opacity="0.16"/><rect x="24.1" y="2.500" width="1.100" height="9.0" fill="#fff" opacity="0.34"/><rect x="23.1" y="3.500" width="0.900" height="7.0" fill="#000" opacity="0.16"/><rect x="32.2" y="2.500" width="1.100" height="9.0" fill="#fff" opacity="0.36"/><rect x="31.2" y="3.500" width="0.900" height="7.0" fill="#000" opacity="0.16"/><rect x="41.1" y="2.500" width="1.100" height="9.0" fill="#fff" opacity="0.38"/><rect x="40.1" y="3.500" width="0.900" height="7.0" fill="#000" opacity="0.16"/><rect x="50.4" y="2.500" width="1.100" height="9.0" fill="#fff" opacity="0.40"/><rect x="49.4" y="3.500" width="0.900" height="7.0" fill="#000" opacity="0.16"/><rect x="60.0" y="2.500" width="1.100" height="9.0" fill="#fff" opacity="0.40"/><rect x="59.0" y="3.500" width="0.900" height="7.0" fill="#000" opacity="0.16"/><rect x="69.6" y="2.500" width="1.100" height="9.0" fill="#fff" opacity="0.39"/><rect x="68.6" y="3.500" width="0.900" height="7.0" fill="#000" opacity="0.16"/><rect x="78.8" y="2.500" width="1.100" height="9.0" fill="#fff" opacity="0.38"/><rect x="77.8" y="3.500" width="0.900" height="7.0" fill="#000" opacity="0.16"/><rect x="87.6" y="2.500" width="1.100" height="9.0" fill="#fff" opacity="0.36"/><rect x="86.6" y="3.500" width="0.900" height="7.0" fill="#000" opacity="0.16"/><rect x="95.5" y="2.500" width="1.100" height="9.0" fill="#fff" opacity="0.33"/><rect x="94.5" y="3.500" width="0.900" height="7.0" fill="#000" opacity="0.16"/><rect x="102.4" y="2.500" width="1.100" height="9.0" fill="#fff" opacity="0.29"/><rect x="101.4" y="3.500" width="0.900" height="7.0" fill="#000" opacity="0.16"/><rect x="108.2" y="2.500" width="1.100" height="9.0" fill="#fff" opacity="0.25"/><rect x="107.2" y="3.500" width="0.900" height="7.0" fill="#000" opacity="0.16"/><rect x="112.6" y="2.500" width="1.100" height="9.0" fill="#fff" opacity="0.20"/><rect x="111.6" y="3.500" width="0.900" height="7.0" fill="#000" opacity="0.16"/><rect x="115.5" y="2.500" width="1.100" height="9.0" fill="#fff" opacity="0.15"/><rect x="114.5" y="3.500" width="0.900" height="7.0" fill="#000" opacity="0.16"/><rect x="116.9" y="2.500" width="1.100" height="9.0" fill="#fff" opacity="0.10"/><rect x="115.9" y="3.500" width="0.900" height="7.0" fill="#000" opacity="0.16"/></svg>
<div class="t" style="left:271px;top:551px">Rotz Roty</div>
<div class="t" style="left:1353px;top:551px">Dolly</div>
<svg style="left:0;top:0" width="1397" height="717"><rect x="260.9" y="251.3" width="1.300" height="1.300" fill="#a4a4a4"/><rect x="262.1" y="252.5" width="1.400" height="1.400" fill="#fff"/><rect x="260.9" y="256.2" width="1.300" height="1.300" fill="#a4a4a4"/><rect x="262.1" y="257.4" width="1.400" height="1.400" fill="#fff"/><rect x="260.9" y="261.1" width="1.300" height="1.300" fill="#a4a4a4"/><rect x="262.1" y="262.3" width="1.400" height="1.400" fill="#fff"/><rect x="260.9" y="266.1" width="1.300" height="1.300" fill="#a4a4a4"/><rect x="262.1" y="267.3" width="1.400" height="1.400" fill="#fff"/><rect x="260.9" y="271.0" width="1.300" height="1.300" fill="#a4a4a4"/><rect x="262.1" y="272.2" width="1.400" height="1.400" fill="#fff"/><rect x="260.9" y="275.9" width="1.300" height="1.300" fill="#a4a4a4"/><rect x="262.1" y="277.1" width="1.400" height="1.400" fill="#fff"/><rect x="260.9" y="280.8" width="1.300" height="1.300" fill="#a4a4a4"/><rect x="262.1" y="282.0" width="1.400" height="1.400" fill="#fff"/><rect x="260.9" y="285.7" width="1.300" height="1.300" fill="#a4a4a4"/><rect x="262.1" y="286.9" width="1.400" height="1.400" fill="#fff"/><rect x="260.9" y="290.7" width="1.300" height="1.300" fill="#a4a4a4"/><rect x="262.1" y="291.9" width="1.400" height="1.400" fill="#fff"/><rect x="260.9" y="295.6" width="1.300" height="1.300" fill="#a4a4a4"/><rect x="262.1" y="296.8" width="1.400" height="1.400" fill="#fff"/><rect x="260.9" y="300.5" width="1.300" height="1.300" fill="#a4a4a4"/><rect x="262.1" y="301.7" width="1.400" height="1.400" fill="#fff"/><rect x="260.9" y="305.4" width="1.300" height="1.300" fill="#a4a4a4"/><rect x="262.1" y="306.6" width="1.400" height="1.400" fill="#fff"/><rect x="260.9" y="310.3" width="1.300" height="1.300" fill="#a4a4a4"/><rect x="262.1" y="311.5" width="1.400" height="1.400" fill="#fff"/><rect x="260.9" y="315.3" width="1.300" height="1.300" fill="#a4a4a4"/><rect x="262.1" y="316.5" width="1.400" height="1.400" fill="#fff"/><rect x="260.9" y="320.2" width="1.300" height="1.300" fill="#a4a4a4"/><rect x="262.1" y="321.4" width="1.400" height="1.400" fill="#fff"/><rect x="260.9" y="325.1" width="1.300" height="1.300" fill="#a4a4a4"/><rect x="262.1" y="326.3" width="1.400" height="1.400" fill="#fff"/><rect x="260.9" y="330.0" width="1.300" height="1.300" fill="#a4a4a4"/><rect x="262.1" y="331.2" width="1.400" height="1.400" fill="#fff"/><rect x="260.9" y="334.9" width="1.300" height="1.300" fill="#a4a4a4"/><rect x="262.1" y="336.1" width="1.400" height="1.400" fill="#fff"/><rect x="260.9" y="339.9" width="1.300" height="1.300" fill="#a4a4a4"/><rect x="262.1" y="341.1" width="1.400" height="1.400" fill="#fff"/><rect x="260.9" y="344.8" width="1.300" height="1.300" fill="#a4a4a4"/><rect x="262.1" y="346.0" width="1.400" height="1.400" fill="#fff"/><rect x="260.9" y="349.7" width="1.300" height="1.300" fill="#a4a4a4"/><rect x="262.1" y="350.9" width="1.400" height="1.400" fill="#fff"/><rect x="260.9" y="354.6" width="1.300" height="1.300" fill="#a4a4a4"/><rect x="262.1" y="355.8" width="1.400" height="1.400" fill="#fff"/><rect x="260.9" y="359.5" width="1.300" height="1.300" fill="#a4a4a4"/><rect x="262.1" y="360.7" width="1.400" height="1.400" fill="#fff"/><rect x="260.9" y="364.5" width="1.300" height="1.300" fill="#a4a4a4"/><rect x="262.1" y="365.7" width="1.400" height="1.400" fill="#fff"/><rect x="260.9" y="369.4" width="1.300" height="1.300" fill="#a4a4a4"/><rect x="262.1" y="370.6" width="1.400" height="1.400" fill="#fff"/><rect x="260.9" y="374.3" width="1.300" height="1.300" fill="#a4a4a4"/><rect x="262.1" y="375.5" width="1.400" height="1.400" fill="#fff"/><rect x="260.9" y="379.2" width="1.300" height="1.300" fill="#a4a4a4"/><rect x="262.1" y="380.4" width="1.400" height="1.400" fill="#fff"/><rect x="260.9" y="384.1" width="1.300" height="1.300" fill="#a4a4a4"/><rect x="262.1" y="385.3" width="1.400" height="1.400" fill="#fff"/><rect x="260.9" y="389.1" width="1.300" height="1.300" fill="#a4a4a4"/><rect x="262.1" y="390.3" width="1.400" height="1.400" fill="#fff"/><rect x="260.9" y="394.0" width="1.300" height="1.300" fill="#a4a4a4"/><rect x="262.1" y="395.2" width="1.400" height="1.400" fill="#fff"/><rect x="260.9" y="398.9" width="1.300" height="1.300" fill="#a4a4a4"/><rect x="262.1" y="400.1" width="1.400" height="1.400" fill="#fff"/><rect x="260.9" y="403.8" width="1.300" height="1.300" fill="#a4a4a4"/><rect x="262.1" y="405.0" width="1.400" height="1.400" fill="#fff"/><rect x="260.9" y="408.7" width="1.300" height="1.300" fill="#a4a4a4"/><rect x="262.1" y="409.9" width="1.400" height="1.400" fill="#fff"/><rect x="260.9" y="413.7" width="1.300" height="1.300" fill="#a4a4a4"/><rect x="262.1" y="414.9" width="1.400" height="1.400" fill="#fff"/><rect x="260.9" y="418.6" width="1.300" height="1.300" fill="#a4a4a4"/><rect x="262.1" y="419.8" width="1.400" height="1.400" fill="#fff"/><rect x="260.9" y="423.5" width="1.300" height="1.300" fill="#a4a4a4"/><rect x="262.1" y="424.7" width="1.400" height="1.400" fill="#fff"/><rect x="260.9" y="428.4" width="1.300" height="1.300" fill="#a4a4a4"/><rect x="262.1" y="429.6" width="1.400" height="1.400" fill="#fff"/><rect x="260.9" y="433.3" width="1.300" height="1.300" fill="#a4a4a4"/><rect x="262.1" y="434.5" width="1.400" height="1.400" fill="#fff"/><rect x="260.9" y="438.3" width="1.300" height="1.300" fill="#a4a4a4"/><rect x="262.1" y="439.5" width="1.400" height="1.400" fill="#fff"/><rect x="260.9" y="443.2" width="1.300" height="1.300" fill="#a4a4a4"/><rect x="262.1" y="444.4" width="1.400" height="1.400" fill="#fff"/><rect x="260.9" y="448.1" width="1.300" height="1.300" fill="#a4a4a4"/><rect x="262.1" y="449.3" width="1.400" height="1.400" fill="#fff"/><rect x="260.9" y="453.0" width="1.300" height="1.300" fill="#a4a4a4"/><rect x="262.1" y="454.2" width="1.400" height="1.400" fill="#fff"/><rect x="638.9" y="580.1" width="1.300" height="1.300" fill="#a4a4a4"/><rect x="640.1" y="581.3" width="1.400" height="1.400" fill="#fff"/><rect x="643.8" y="580.1" width="1.300" height="1.300" fill="#a4a4a4"/><rect x="645.0" y="581.3" width="1.400" height="1.400" fill="#fff"/><rect x="648.8" y="580.1" width="1.300" height="1.300" fill="#a4a4a4"/><rect x="650.0" y="581.3" width="1.400" height="1.400" fill="#fff"/><rect x="653.7" y="580.1" width="1.300" height="1.300" fill="#a4a4a4"/><rect x="654.9" y="581.3" width="1.400" height="1.400" fill="#fff"/><rect x="658.7" y="580.1" width="1.300" height="1.300" fill="#a4a4a4"/><rect x="659.9" y="581.3" width="1.400" height="1.400" fill="#fff"/><rect x="663.6" y="580.1" width="1.300" height="1.300" fill="#a4a4a4"/><rect x="664.8" y="581.3" width="1.400" height="1.400" fill="#fff"/><rect x="668.5" y="580.1" width="1.300" height="1.300" fill="#a4a4a4"/><rect x="669.7" y="581.3" width="1.400" height="1.400" fill="#fff"/><rect x="673.5" y="580.1" width="1.300" height="1.300" fill="#a4a4a4"/><rect x="674.7" y="581.3" width="1.400" height="1.400" fill="#fff"/><rect x="678.4" y="580.1" width="1.300" height="1.300" fill="#a4a4a4"/><rect x="679.6" y="581.3" width="1.400" height="1.400" fill="#fff"/><rect x="683.4" y="580.1" width="1.300" height="1.300" fill="#a4a4a4"/><rect x="684.6" y="581.3" width="1.400" height="1.400" fill="#fff"/><rect x="688.3" y="580.1" width="1.300" height="1.300" fill="#a4a4a4"/><rect x="689.5" y="581.3" width="1.400" height="1.400" fill="#fff"/><rect x="693.2" y="580.1" width="1.300" height="1.300" fill="#a4a4a4"/><rect x="694.4" y="581.3" width="1.400" height="1.400" fill="#fff"/><rect x="698.2" y="580.1" width="1.300" height="1.300" fill="#a4a4a4"/><rect x="699.4" y="581.3" width="1.400" height="1.400" fill="#fff"/><rect x="703.1" y="580.1" width="1.300" height="1.300" fill="#a4a4a4"/><rect x="704.3" y="581.3" width="1.400" height="1.400" fill="#fff"/><rect x="708.1" y="580.1" width="1.300" height="1.300" fill="#a4a4a4"/><rect x="709.3" y="581.3" width="1.400" height="1.400" fill="#fff"/><rect x="713.0" y="580.1" width="1.300" height="1.300" fill="#a4a4a4"/><rect x="714.2" y="581.3" width="1.400" height="1.400" fill="#fff"/><rect x="717.9" y="580.1" width="1.300" height="1.300" fill="#a4a4a4"/><rect x="719.1" y="581.3" width="1.400" height="1.400" fill="#fff"/><rect x="722.9" y="580.1" width="1.300" height="1.300" fill="#a4a4a4"/><rect x="724.1" y="581.3" width="1.400" height="1.400" fill="#fff"/><rect x="727.8" y="580.1" width="1.300" height="1.300" fill="#a4a4a4"/><rect x="729.0" y="581.3" width="1.400" height="1.400" fill="#fff"/><rect x="732.8" y="580.1" width="1.300" height="1.300" fill="#a4a4a4"/><rect x="734.0" y="581.3" width="1.400" height="1.400" fill="#fff"/><rect x="737.7" y="580.1" width="1.300" height="1.300" fill="#a4a4a4"/><rect x="738.9" y="581.3" width="1.400" height="1.400" fill="#fff"/><rect x="742.6" y="580.1" width="1.300" height="1.300" fill="#a4a4a4"/><rect x="743.8" y="581.3" width="1.400" height="1.400" fill="#fff"/><rect x="747.6" y="580.1" width="1.300" height="1.300" fill="#a4a4a4"/><rect x="748.8" y="581.3" width="1.400" height="1.400" fill="#fff"/><rect x="752.5" y="580.1" width="1.300" height="1.300" fill="#a4a4a4"/><rect x="753.7" y="581.3" width="1.400" height="1.400" fill="#fff"/><rect x="757.5" y="580.1" width="1.300" height="1.300" fill="#a4a4a4"/><rect x="758.7" y="581.3" width="1.400" height="1.400" fill="#fff"/><rect x="762.4" y="580.1" width="1.300" height="1.300" fill="#a4a4a4"/><rect x="763.6" y="581.3" width="1.400" height="1.400" fill="#fff"/><rect x="767.3" y="580.1" width="1.300" height="1.300" fill="#a4a4a4"/><rect x="768.5" y="581.3" width="1.400" height="1.400" fill="#fff"/><rect x="772.3" y="580.1" width="1.300" height="1.300" fill="#a4a4a4"/><rect x="773.5" y="581.3" width="1.400" height="1.400" fill="#fff"/><rect x="777.2" y="580.1" width="1.300" height="1.300" fill="#a4a4a4"/><rect x="778.4" y="581.3" width="1.400" height="1.400" fill="#fff"/><rect x="782.2" y="580.1" width="1.300" height="1.300" fill="#a4a4a4"/><rect x="783.4" y="581.3" width="1.400" height="1.400" fill="#fff"/><rect x="787.1" y="580.1" width="1.300" height="1.300" fill="#a4a4a4"/><rect x="788.3" y="581.3" width="1.400" height="1.400" fill="#fff"/><rect x="792.0" y="580.1" width="1.300" height="1.300" fill="#a4a4a4"/><rect x="793.2" y="581.3" width="1.400" height="1.400" fill="#fff"/><rect x="797.0" y="580.1" width="1.300" height="1.300" fill="#a4a4a4"/><rect x="798.2" y="581.3" width="1.400" height="1.400" fill="#fff"/><rect x="801.9" y="580.1" width="1.300" height="1.300" fill="#a4a4a4"/><rect x="803.1" y="581.3" width="1.400" height="1.400" fill="#fff"/><rect x="806.9" y="580.1" width="1.300" height="1.300" fill="#a4a4a4"/><rect x="808.1" y="581.3" width="1.400" height="1.400" fill="#fff"/><rect x="811.8" y="580.1" width="1.300" height="1.300" fill="#a4a4a4"/><rect x="813.0" y="581.3" width="1.400" height="1.400" fill="#fff"/><rect x="816.7" y="580.1" width="1.300" height="1.300" fill="#a4a4a4"/><rect x="817.9" y="581.3" width="1.400" height="1.400" fill="#fff"/><rect x="821.7" y="580.1" width="1.300" height="1.300" fill="#a4a4a4"/><rect x="822.9" y="581.3" width="1.400" height="1.400" fill="#fff"/><rect x="826.6" y="580.1" width="1.300" height="1.300" fill="#a4a4a4"/><rect x="827.8" y="581.3" width="1.400" height="1.400" fill="#fff"/><rect x="831.6" y="580.1" width="1.300" height="1.300" fill="#a4a4a4"/><rect x="832.8" y="581.3" width="1.400" height="1.400" fill="#fff"/><rect x="836.5" y="580.1" width="1.300" height="1.300" fill="#a4a4a4"/><rect x="837.7" y="581.3" width="1.400" height="1.400" fill="#fff"/><rect x="841.4" y="580.1" width="1.300" height="1.300" fill="#a4a4a4"/><rect x="842.6" y="581.3" width="1.400" height="1.400" fill="#fff"/><rect x="846.4" y="580.1" width="1.300" height="1.300" fill="#a4a4a4"/><rect x="847.6" y="581.3" width="1.400" height="1.400" fill="#fff"/><rect x="851.3" y="580.1" width="1.300" height="1.300" fill="#a4a4a4"/><rect x="852.5" y="581.3" width="1.400" height="1.400" fill="#fff"/><rect x="856.3" y="580.1" width="1.300" height="1.300" fill="#a4a4a4"/><rect x="857.5" y="581.3" width="1.400" height="1.400" fill="#fff"/><rect x="861.2" y="580.1" width="1.300" height="1.300" fill="#a4a4a4"/><rect x="862.4" y="581.3" width="1.400" height="1.400" fill="#fff"/><rect x="866.1" y="580.1" width="1.300" height="1.300" fill="#a4a4a4"/><rect x="867.3" y="581.3" width="1.400" height="1.400" fill="#fff"/><rect x="871.1" y="580.1" width="1.300" height="1.300" fill="#a4a4a4"/><rect x="872.3" y="581.3" width="1.400" height="1.400" fill="#fff"/><rect x="876.0" y="580.1" width="1.300" height="1.300" fill="#a4a4a4"/><rect x="877.2" y="581.3" width="1.400" height="1.400" fill="#fff"/><rect x="881.0" y="580.1" width="1.300" height="1.300" fill="#a4a4a4"/><rect x="882.2" y="581.3" width="1.400" height="1.400" fill="#fff"/><rect x="885.9" y="580.1" width="1.300" height="1.300" fill="#a4a4a4"/><rect x="887.1" y="581.3" width="1.400" height="1.400" fill="#fff"/><rect x="890.8" y="580.1" width="1.300" height="1.300" fill="#a4a4a4"/><rect x="892.0" y="581.3" width="1.400" height="1.400" fill="#fff"/><rect x="895.8" y="580.1" width="1.300" height="1.300" fill="#a4a4a4"/><rect x="897.0" y="581.3" width="1.400" height="1.400" fill="#fff"/><rect x="900.7" y="580.1" width="1.300" height="1.300" fill="#a4a4a4"/><rect x="901.9" y="581.3" width="1.400" height="1.400" fill="#fff"/><rect x="905.7" y="580.1" width="1.300" height="1.300" fill="#a4a4a4"/><rect x="906.9" y="581.3" width="1.400" height="1.400" fill="#fff"/><rect x="910.6" y="580.1" width="1.300" height="1.300" fill="#a4a4a4"/><rect x="911.8" y="581.3" width="1.400" height="1.400" fill="#fff"/><rect x="915.5" y="580.1" width="1.300" height="1.300" fill="#a4a4a4"/><rect x="916.7" y="581.3" width="1.400" height="1.400" fill="#fff"/><rect x="920.5" y="580.1" width="1.300" height="1.300" fill="#a4a4a4"/><rect x="921.7" y="581.3" width="1.400" height="1.400" fill="#fff"/><rect x="925.4" y="580.1" width="1.300" height="1.300" fill="#a4a4a4"/><rect x="926.6" y="581.3" width="1.400" height="1.400" fill="#fff"/><rect x="930.4" y="580.1" width="1.300" height="1.300" fill="#a4a4a4"/><rect x="931.6" y="581.3" width="1.400" height="1.400" fill="#fff"/><rect x="935.3" y="580.1" width="1.300" height="1.300" fill="#a4a4a4"/><rect x="936.5" y="581.3" width="1.400" height="1.400" fill="#fff"/><rect x="940.2" y="580.1" width="1.300" height="1.300" fill="#a4a4a4"/><rect x="941.4" y="581.3" width="1.400" height="1.400" fill="#fff"/><rect x="945.2" y="580.1" width="1.300" height="1.300" fill="#a4a4a4"/><rect x="946.4" y="581.3" width="1.400" height="1.400" fill="#fff"/><rect x="950.1" y="580.1" width="1.300" height="1.300" fill="#a4a4a4"/><rect x="951.3" y="581.3" width="1.400" height="1.400" fill="#fff"/><rect x="955.1" y="580.1" width="1.300" height="1.300" fill="#a4a4a4"/><rect x="956.3" y="581.3" width="1.400" height="1.400" fill="#fff"/><rect x="960.0" y="580.1" width="1.300" height="1.300" fill="#a4a4a4"/><rect x="961.2" y="581.3" width="1.400" height="1.400" fill="#fff"/><rect x="964.9" y="580.1" width="1.300" height="1.300" fill="#a4a4a4"/><rect x="966.1" y="581.3" width="1.400" height="1.400" fill="#fff"/><rect x="969.9" y="580.1" width="1.300" height="1.300" fill="#a4a4a4"/><rect x="971.1" y="581.3" width="1.400" height="1.400" fill="#fff"/><rect x="974.8" y="580.1" width="1.300" height="1.300" fill="#a4a4a4"/><rect x="976.0" y="581.3" width="1.400" height="1.400" fill="#fff"/><rect x="979.8" y="580.1" width="1.300" height="1.300" fill="#a4a4a4"/><rect x="981.0" y="581.3" width="1.400" height="1.400" fill="#fff"/><rect x="984.7" y="580.1" width="1.300" height="1.300" fill="#a4a4a4"/><rect x="985.9" y="581.3" width="1.400" height="1.400" fill="#fff"/><rect x="989.6" y="580.1" width="1.300" height="1.300" fill="#a4a4a4"/><rect x="990.8" y="581.3" width="1.400" height="1.400" fill="#fff"/><rect x="994.6" y="580.1" width="1.300" height="1.300" fill="#a4a4a4"/><rect x="995.8" y="581.3" width="1.400" height="1.400" fill="#fff"/><rect x="999.5" y="580.1" width="1.300" height="1.300" fill="#a4a4a4"/><rect x="1000.7" y="581.3" width="1.400" height="1.400" fill="#fff"/><rect x="1004.5" y="580.1" width="1.300" height="1.300" fill="#a4a4a4"/><rect x="1005.7" y="581.3" width="1.400" height="1.400" fill="#fff"/><rect x="1009.4" y="580.1" width="1.300" height="1.300" fill="#a4a4a4"/><rect x="1010.6" y="581.3" width="1.400" height="1.400" fill="#fff"/></svg>
<div class="a" style="left:265px;top:584px;width:1123px;height:94px;box-sizing:border-box;border:1px solid #8c8c8c;border-radius:3px;background:#fff;box-shadow:inset 0 0 0 1px #a6a6a6"></div>
<div class="t log" style="left:269px;top:590px"><i>[Geometry/Geo]</i> axis z = 1</div>
<div class="t log" style="left:269px;top:607px"><i>[Geometry/Geo]</i> angle = 67.5 deg</div>
<div class="t log" style="left:269px;top:624px"><i>[Geometry/Geo]</i> <span style="letter-spacing:-0.9px">===&gt;</span> Muon station <span style="letter-spacing:-0.9px">&lt;===</span></div>
<div class="t log" style="left:269px;top:641px"><i>[Geometry/Geo]</i> <span style="letter-spacing:-0.25px">Name: BMS</span></div>
<div class="t log" style="left:269px;top:658px"><i>[Geometry/Geo]</i> <span style="letter-spacing:-0.13px">(Eta,Phi) index: (5, 2)</span></div>
<div class="btn" style="left:1370px;top:585px;width:16px;height:17px;border-radius:2px"></div>
<div class="a" style="left:1371px;top:602px;width:14px;height:16px;background:#dcdcdc"></div>
<div class="btn" style="left:1370px;top:618px;width:16px;height:27px;border-radius:2px"></div>
<div class="btn" style="left:1370px;top:645px;width:16px;height:16px;border-radius:2px"></div>
<div class="btn" style="left:1370px;top:660px;width:16px;height:16px;border-radius:2px"></div>
<svg style="left:0;top:0" width="1397" height="717"><path d="M1378 591l4 5h-8zM1378 650l4 5h-8zM1378 671l4-5h-8z" fill="#000"/></svg>
<svg style="left:21.8px;top:64.8px" width="15" height="13.2" viewBox="0 0 16 14"><defs><linearGradient id="fsg" x1="0" y1="0" x2="1" y2="1"><stop offset="0" stop-color="#fff"/><stop offset="1" stop-color="#dfe4ee"/></linearGradient></defs><rect x="0.5" y="0.5" width="15" height="13" fill="url(#fsg)" stroke="#2f6fe0" stroke-width="1"/><rect x="0" y="0" width="16" height="2.6" fill="#1f5fe0"/><path d="M1.5 3.5h2.6l-.9.9 1.3 1.3-.8.8-1.300-1.300-.9.9zM14.500 3.500v2.600l-.9-.9-1.300 1.300-.8-.8 1.300-1.300-.9-.9zM1.500 12.500v-2.600l.9.9 1.300-1.300.8.8-1.300 1.300.9.9zM14.500 12.500h-2.600l.9-.9-1.300-1.300.8-.8 1.300 1.300.9-.9z" fill="#ff3a20"/></svg>
<svg style="left:57.8px;top:63.900000000000006px" width="16" height="16" viewBox="0 0 16 16"><defs><radialGradient id="ig" cx="0.4" cy="0.3" r="0.8"><stop offset="0" stop-color="#4aa0ff"/><stop offset="0.6" stop-color="#0a5cf0"/><stop offset="1" stop-color="#0338b8"/></radialGradient></defs><circle cx="8" cy="8" r="7" fill="url(#ig)" stroke="#0a3cc0" stroke-width="0.8"/><circle cx="8" cy="4.3" r="1.3" fill="#fff"/><path d="M6.2 6.6h2.9v5h1v1.2H6v-1.2h1.1v-3.8H6.2z" fill="#fff"/></svg>
<svg style="left:94.3px;top:65.5px" width="16" height="12" viewBox="0 0 16 12"><defs><linearGradient id="cg" x1="0" y1="0" x2="0" y2="1"><stop offset="0" stop-color="#c8c8c8"/><stop offset="0.5" stop-color="#a8a8a8"/><stop offset="1" stop-color="#8c8c8c"/></linearGradient></defs><rect x="1.5" y="0" width="3.5" height="2" fill="#9a9a9a"/><rect x="0.3" y="1.3" width="15.4" height="10" rx="1" fill="url(#cg)" stroke="#8a8a8a" stroke-width="0.6"/><rect x="0.3" y="9.5" width="15.4" height="1.8" fill="#8a8a8a"/><rect x="12.6" y="2.3" width="2.2" height="1.2" fill="#4a90ff"/><circle cx="9.2" cy="6.3" r="3.8" fill="#e4e4e4" stroke="#8a8a8a" stroke-width="0.7"/><circle cx="9.2" cy="6.3" r="2.4" fill="#c0c4d0"/><circle cx="9.2" cy="6.3" r="1.500" fill="#1a2a88"/><circle cx="9.2" cy="6.3" r="0.700" fill="#6a9af0"/></svg>
<svg style="left:130.2px;top:64px" width="16" height="16" viewBox="0 0 16 16"><defs><linearGradient id="pg" x1="0" y1="0" x2="0" y2="1"><stop offset="0" stop-color="#f4f4f4"/><stop offset="1" stop-color="#c4c4c4"/></linearGradient></defs><rect x="4" y="0.4" width="8" height="5.2" fill="#fff" stroke="#b0b0b0" stroke-width="0.6"/><path d="M1.5 5.5h13l1.2 2v5.2h-15.4V7.500z" fill="url(#pg)" stroke="#a8a8a8" stroke-width="0.6"/><rect x="2.2" y="12" width="11.6" height="1.6" fill="#333"/><rect x="3" y="13.4" width="10" height="2.2" fill="#fff" stroke="#b8b8b8" stroke-width="0.5"/><circle cx="2.4" cy="8.3" r="0.7" fill="#2fd02f"/></svg>
<svg style="left:0;top:0" width="1397" height="717"><path d="M1360 92.2L1377 100.4L1372.4 103L1378 108.2L1376.3 110L1370.6 104.8L1368 109Z" fill="#ff2a2a" stroke="#a01010" stroke-width="0.7" stroke-linejoin="round"/></svg>
<svg style="left:1359.3px;top:118.9px" width="19.6" height="23.3" viewBox="0 0 18 22"><path d="M6.2 19.2L6.2 16.8L1.2 12.2Q0.2 10.8 1.6 10.6Q3 10.6 5.8 13L5.8 3.2Q6.6 1.6 8 3.2L8 1.4Q9.2 -0.2 10.6 1.4L10.6 2.2Q12 0.8 13.2 2.4L13.2 4Q14.8 3 15.6 4.8L15.6 13.5Q15.6 16 14.6 17L14.6 19.2Z" fill="#fff" stroke="#222" stroke-width="1" stroke-linejoin="round"/><path d="M8 3.2v6M10.6 2.2v7M13.2 4v5.5" stroke="#888" stroke-width="0.7" fill="none"/><path d="M8.6 12.5l.6 3M10.6 12.6v3M12.8 12.5l-.6 3" stroke="#777" stroke-width="0.7" fill="none"/><path d="M5.5 20.6h4M10.8 20.6h4.2" stroke="#222" stroke-width="1.2"/></svg>
<svg style="left:1358.3px;top:149.3px" width="22" height="21.5" viewBox="0 0 22 21.5"><path d="M2 0.5H21.3V20.8H0.5V2Z" fill="#f4f01a" stroke="#1a1a1a" stroke-width="1"/><path d="M0.5 2H2V0.5Z" fill="#fff" stroke="#1a1a1a" stroke-width="0.6"/><ellipse cx="10.8" cy="10.4" rx="10.4" ry="6.4" fill="#fff" stroke="#9aa" stroke-width="0.5"/><circle cx="10.6" cy="10" r="6.2" fill="#1a6ae0"/><circle cx="10.6" cy="10" r="6.2" fill="none" stroke="#0a3a9a" stroke-width="0.8"/><circle cx="11.2" cy="9.4" r="3.1" fill="#080818"/><path d="M11.2 5.2l.7 1.8 1.8.7-1.8.7-.7 1.8-.7-1.8-1.8-.7 1.8-.7z" fill="#fff"/><path d="M0.5 9Q10 0.8 21.3 8.6" fill="none" stroke="#222" stroke-width="1"/></svg>
<svg style="left:1359px;top:180.5px" width="20" height="20" viewBox="0 0 20 20"><defs><linearGradient id="flg" x1="0" y1="0" x2="1" y2="1"><stop offset="0" stop-color="#d4d4d4"/><stop offset="1" stop-color="#7c7c7c"/></linearGradient></defs><path d="M14.6 0.6L18.4 3.6L10.2 12.2L11.4 16.4L8.6 19.2Q3 17.6 0.8 11.8L3.2 9.4L7.4 9.4Z" fill="url(#flg)" stroke="#777" stroke-width="0.6"/><ellipse cx="4.7" cy="15.5" rx="2.6" ry="4.6" transform="rotate(-40 4.7 15.5)" fill="#f2f2f2" stroke="#999" stroke-width="0.6"/></svg>
<svg style="left:1358.4px;top:209px" width="20" height="20" viewBox="0 0 20 20"><path d="M9.2 0.2L0.2 8.8L8.6 16.6Z" fill="#ffee10"/><path d="M9.2 0.2L19 6L8.6 16.6Z" fill="#ff1010"/><path d="M19 6L19.6 14.8L13.4 19.6L8.6 16.6Z" fill="#8a8a20"/><path d="M19 6L13.4 19.6" stroke="#b04020" stroke-width="0.8"/></svg>
<svg style="left:84px;top:653.8px" width="16.5" height="10.5" viewBox="0 0 16.5 10.5"><defs><linearGradient id="gg" x1="0" y1="0" x2="0" y2="1"><stop offset="0" stop-color="#6fe86f"/><stop offset="0.5" stop-color="#10c010"/><stop offset="1" stop-color="#0a8a0a"/></linearGradient></defs><path d="M0.2 4.8Q3 0.6 7.6 0.2Q12.6 0.4 13.4 5L16 4.6L11.4 10L6.4 6L9.2 5.6Q8.4 3 5.6 3Q2.8 3.2 0.8 5.4Z" fill="url(#gg)" stroke="#0a9a0a" stroke-width="0.5" stroke-linejoin="round"/></svg>
<svg style="left:119px;top:649.9px" width="18" height="18" viewBox="0 0 18 18"><defs><radialGradient id="bg2" cx="0.45" cy="0.3" r="0.75"><stop offset="0" stop-color="#8ab8ff"/><stop offset="0.6" stop-color="#3a7af0"/><stop offset="1" stop-color="#1a4ad8"/></radialGradient></defs><circle cx="9" cy="9" r="7.7" fill="url(#bg2)" stroke="#1030b8" stroke-width="1"/><path d="M4.4 8.2h5.2L7.9 6.3l1.4-1L13.4 9l-4.1 3.800-1.400-1 1.700-1.900H4.400z" fill="#fff"/></svg>
<svg style="left:1371px;top:65px" width="14" height="14" viewBox="0 0 14 14"><rect x="5.500" y="2.800" width="5.200" height="4.800" fill="#ececec" stroke="#000" stroke-width="1.100"/><rect x="4.950" y="2.200" width="6.300" height="1.700" fill="#000"/><rect x="3.500" y="5.700" width="5.400" height="4.900" fill="#f4f4f4" stroke="#000" stroke-width="1.100"/><rect x="2.950" y="5.100" width="6.500" height="1.700" fill="#000"/></svg>
<svg style="left:1352.5px;top:690.2px" width="22" height="25" viewBox="0 0 22 25"><defs><radialGradient id="glb" cx="0.42" cy="0.3" r="0.8"><stop offset="0" stop-color="#8aa4e8"/><stop offset="0.45" stop-color="#2a4ab8"/><stop offset="1" stop-color="#0a1a80"/></radialGradient><linearGradient id="glh" x1="0" y1="0" x2="0" y2="1"><stop offset="0" stop-color="#fff" stop-opacity=".75"/><stop offset="1" stop-color="#fff" stop-opacity="0"/></linearGradient></defs><circle cx="11" cy="10.500" r="9.800" fill="url(#glb)" stroke="#2a3a9a" stroke-width="0.6"/><path d="M8.200 5.200Q10 3.200 13.500 3.600Q16.800 5 17.200 8.500Q16 10.500 14.800 11.500Q13.800 14.500 13 15Q11.500 12.500 11.300 10.500Q9.500 9.500 8.500 7.800Z" fill="#eef0fa"/><path d="M2.200 9.500Q4.500 8.800 5.800 10.200Q5.500 13 3.800 14.200Q2.200 12.500 2.200 9.500Z" fill="#b8c4ee"/><path d="M17.500 11.500Q19.200 11.800 19.500 13.500Q18.800 15 17.500 14.500Z" fill="#c8d0f0"/><ellipse cx="10" cy="5.500" rx="7" ry="4.500" fill="url(#glh)"/><path d="M10.300 20.200h1.400l.5 1.800h-2.400z" fill="#ccc" stroke="#888" stroke-width="0.4"/><rect x="3.800" y="22" width="14.400" height="2.600" rx="0.8" fill="#c4c4c4" stroke="#8a8a8a" stroke-width="0.5"/></svg>
<svg style="left:1383px;top:703px" width="14" height="14" viewBox="0 0 14 14"><path d="M1 14L14 1" stroke="#fff" stroke-width="1.400"/><path d="M2.5 14L14 2.5" stroke="#9a9a9a" stroke-width="1.200"/><path d="M5 14L14 5" stroke="#fff" stroke-width="1.400"/><path d="M6.5 14L14 6.5" stroke="#9a9a9a" stroke-width="1.200"/><path d="M9 14L14 9" stroke="#fff" stroke-width="1.400"/><path d="M10.5 14L14 10.5" stroke="#9a9a9a" stroke-width="1.200"/></svg>
</div></body></html>
